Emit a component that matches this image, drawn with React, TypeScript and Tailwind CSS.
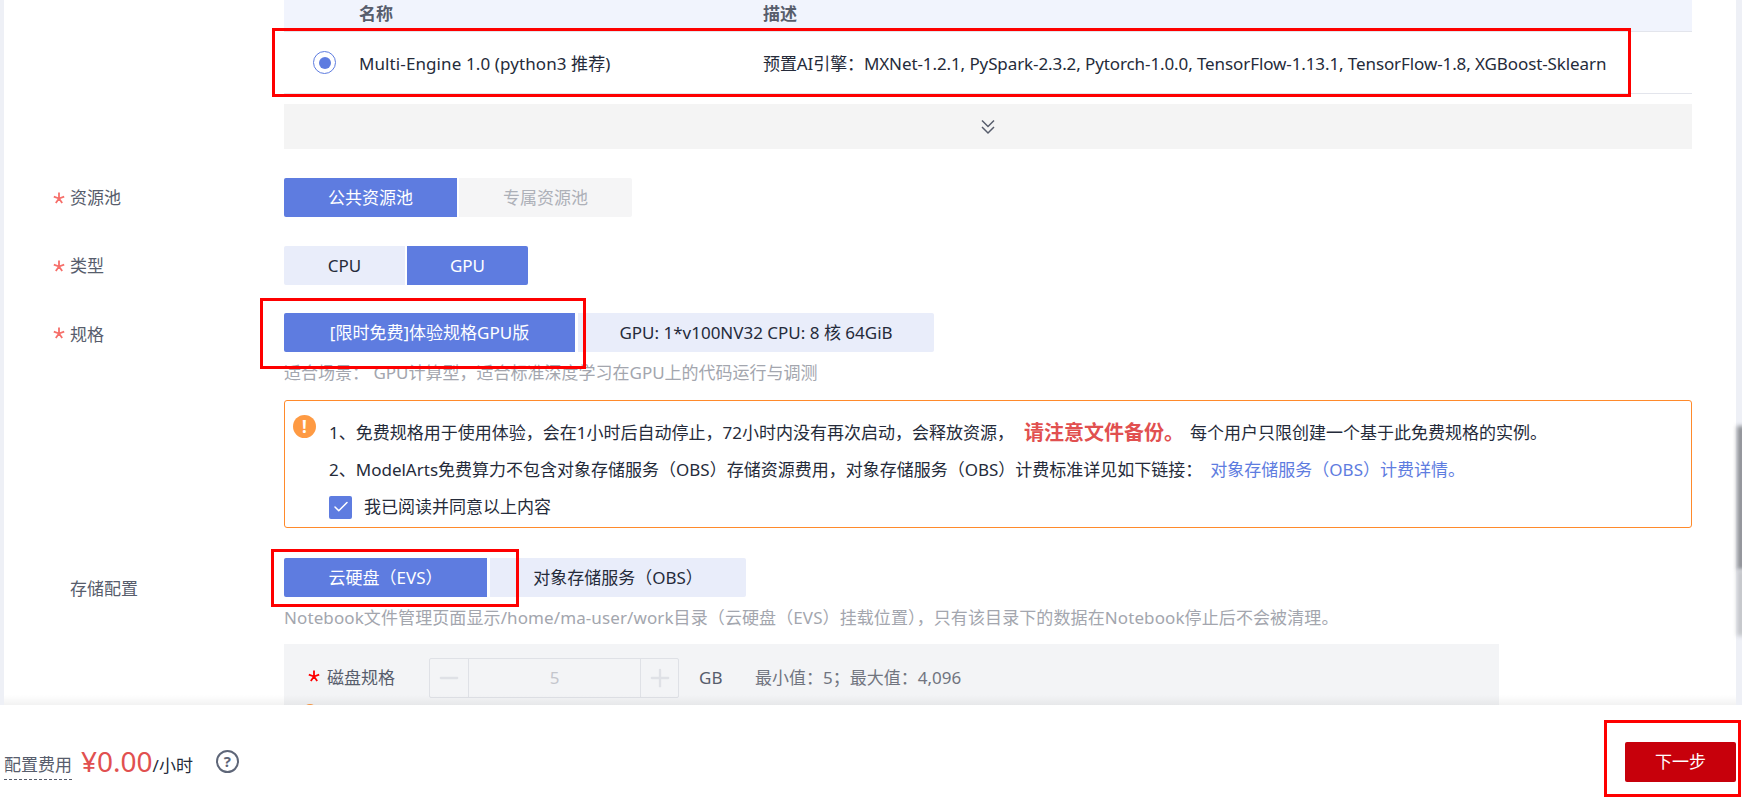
import { Check, Minus, Plus } from "lucide-react";

const font = { fontFamily: '"Noto Sans", "Noto Sans CJK SC", sans-serif' };

function FormRow({ label, required, children, className, labelClass }: { label: string; required?: boolean; children: React.ReactNode; className?: string; labelClass?: string }) {
  return (
    <div className={`flex ${className ?? ""}`}>
      <div className={`relative flex h-[39px] w-[280px] shrink-0 items-center pl-[66px] text-[#575d6c] ${labelClass ?? ""}`}>
        {required && <Star className="absolute left-[49px] top-[14px] text-[#f66f6a]" />}
        {label}
      </div>
      <div className="min-w-0 flex-1">{children}</div>
    </div>
  );
}

function Star({ className }: { className?: string }) {
  return (
    <svg viewBox="0 0 12 12" className={`h-3 w-3 ${className ?? ""}`} fill="none" stroke="currentColor" strokeWidth="1.8">
      <path d="M6 0.5V6.5M6 6.5L0.8 4.6M6 6.5L11.2 4.6M6 6.5L2.8 11M6 6.5L9.2 11" />
    </svg>
  );
}

function Seg({ active, disabled, width, children, className }: { active?: boolean; disabled?: boolean; width: string; children: React.ReactNode; className?: string }) {
  const tone = active
    ? "bg-[#5e7ce0] text-white"
    : disabled
      ? "bg-[#f5f5f6] text-[#adb0b8]"
      : "bg-[#e9edfa] text-[#252b3a]";
  return (
    <div className={`flex h-[39px] items-center justify-center pt-px ${width} ${tone} ${className ?? ""}`}>{children}</div>
  );
}

function RedBox({ className }: { className: string }) {
  return <div className={`pointer-events-none absolute z-30 border-[3px] border-[#fe0000] ${className}`} />;
}

export default function App() {
  return (
    <div style={font} className="relative flex h-[804px] w-[1742px] flex-col overflow-hidden bg-white text-[17px] leading-6 text-[#252b3a]">
      <main className="relative h-[705px] shrink-0 overflow-hidden border-r-[6px] border-l-4 border-r-[#eef0f6] border-l-[#eef0f6] pl-[280px] pr-[44px]">
        {/* table */}
        <div>
          <div className="flex h-[32px] items-center border-b border-[#e3e5ec] bg-[#f1f4fd] pb-[3px] font-semibold text-[#575d6c]">
            <div className="w-[465px] pl-[75px]">名称</div>
            <div className="pl-[14px]">描述</div>
          </div>
          <div className="flex h-[62px] items-center border-b border-[#e3e5ec]">
            <div className="flex w-[465px] items-center pl-[29px]">
              <span className="mr-[23px] flex h-[23px] w-[23px] items-center justify-center rounded-full border border-[#5e7ce0]">
                <span className="h-3 w-3 rounded-full bg-[#5e7ce0]" />
              </span>
              <span className="pt-[2px] tracking-[0.1px]">Multi-Engine 1.0 (python3 推荐)</span>
            </div>
            <div className="whitespace-nowrap pl-[14px] pt-[2px] tracking-[-0.1px]">预置AI引擎：MXNet-1.2.1, PySpark-2.3.2, Pytorch-1.0.0, TensorFlow-1.13.1, TensorFlow-1.8, XGBoost-Sklearn</div>
          </div>
          <div className="mt-[10px] flex h-[45px] items-center justify-center bg-[#f4f4f4] text-[#575d6c]">
            <svg width="16" height="16" viewBox="0 0 16 16" fill="none" stroke="currentColor" strokeWidth="1.5">
              <path d="M2 1.5l6 6 6-6M2 8l6 6 6-6" />
            </svg>
          </div>
        </div>

        <div className="-ml-[280px] mt-[29px] flex flex-col">
          <FormRow label="资源池" required>
            <div className="flex gap-[2px]">
              <Seg active width="w-[173px]" className="rounded-l-[2px]">公共资源池</Seg>
              <Seg disabled width="w-[173px]" className="rounded-r-[2px]">专属资源池</Seg>
            </div>
          </FormRow>
          <FormRow label="类型" required className="mt-[29px]">
            <div className="flex gap-[2px]">
              <Seg width="w-[121px]" className="rounded-l-[2px]">CPU</Seg>
              <Seg active width="w-[121px]" className="rounded-r-[2px]">GPU</Seg>
            </div>
          </FormRow>
          <FormRow label="规格" required labelClass="pt-[4px]" className="mt-[28px]">
            <div className="flex gap-[3px]">
              <Seg active width="w-[291px]" className="rounded-l-[2px] pt-[3px]">[限时免费]体验规格GPU版</Seg>
              <Seg width="w-[356px]" className="rounded-r-[2px] pt-[3px]">GPU: 1*v100NV32 CPU: 8 核 64GiB</Seg>
            </div>
            <div className="mt-[9px] text-[#a3a6ae]">适合场景： GPU计算型，适合标准深度学习在GPU上的代码运行与调测</div>
            <div className="relative mt-[15px] h-[128px] w-[1408px] rounded-[3px] border border-[#ff8a2b] pl-[44px] pt-[20px]">
              <span className="absolute left-[8px] top-[14px] flex h-[23px] w-[23px] items-center justify-center rounded-full bg-[#fe9a43] text-[17px] font-bold text-white">!</span>
              <div className="flex h-6 items-center whitespace-nowrap">
                1、免费规格用于使用体验，会在1小时后自动停止，72小时内没有再次启动，会释放资源，
                <b className="ml-[10px] mr-[6px] text-[20px] text-[#e15050]">请注意文件备份。</b>
                每个用户只限创建一个基于此免费规格的实例。
              </div>
              <div className="mt-[13px] flex h-6 items-center whitespace-nowrap">
                2、ModelArts免费算力不包含对象存储服务（OBS）存储资源费用，对象存储服务（OBS）计费标准详见如下链接：
                <span className="ml-[8px] text-[#5e7ce0]">对象存储服务（OBS）计费详情。</span>
              </div>
              <div className="mt-[13px] flex items-center">
                <span className="mr-[12px] flex h-[23px] w-[23px] items-center justify-center rounded-[2px] bg-[#5e7ce0] text-white">
                  <Check size={18} strokeWidth={2} />
                </span>
                我已阅读并同意以上内容
              </div>
            </div>
          </FormRow>
          <FormRow label="存储配置" labelClass="pt-[22px]" className="mt-[30px]">
            <div className="flex gap-[3px]">
              <Seg active width="w-[203px]" className="rounded-l-[2px]">云硬盘（EVS）</Seg>
              <Seg width="w-[256px]" className="rounded-r-[2px]">对象存储服务（OBS）</Seg>
            </div>
            <div className="mt-[9px] whitespace-nowrap text-[17px] tracking-[0.1px] text-[#a3a6ae]">Notebook文件管理页面显示/home/ma-user/work目录（云硬盘（EVS）挂载位置），只有该目录下的数据在Notebook停止后不会被清理。</div>
            <div className="relative mt-[14px] flex h-[70px] w-[1215px] items-start bg-[#f3f4f6] pt-[14px] text-[#575d6c]">
              <Star className="absolute left-[24px] top-[26px] text-[#fe0000]" />
              <div className="ml-[43px] flex h-[40px] w-[102px] items-center">磁盘规格</div>
              <div className="flex h-[40px] w-[250px] items-center rounded-[2px] border border-[#dfe1e6] text-[#c4c6cc]">
                <span className="flex h-full w-[39px] items-center justify-center border-r border-[#dfe1e6]"><Minus size={28} strokeWidth={2} className="text-[#dfe1e6]" /></span>
                <span className="flex-1 text-center">5</span>
                <span className="flex h-full w-[38px] items-center justify-center border-l border-[#dfe1e6]"><Plus size={28} strokeWidth={2} className="text-[#dfe1e6]" /></span>
              </div>
              <div className="ml-[20px] flex h-[40px] w-[56px] items-center">GB</div>
              <div className="flex h-[40px] items-center whitespace-nowrap text-[#71757f]">最小值：5；最大值：4,096</div>
              <span className="absolute left-[19px] top-[60px] h-[14px] w-[14px] rounded-full bg-[#fe9a43]" />
            </div>
          </FormRow>
        </div>

        <div className="absolute bottom-0 left-0 right-0 h-[10px] bg-gradient-to-b from-transparent to-[#000]/5" />
      </main>

      {/* scrollbar shadow */}
      <div className="absolute left-[1737px] top-[426px] h-[144px] w-[8px] bg-[#8f9196] blur-[2px]" />
      <div className="absolute left-[1737px] top-[570px] h-[66px] w-[8px] bg-[#c4c6ca] blur-[2px]" />

      <footer className="relative flex h-[99px] items-center justify-between bg-white pl-1 pr-[6px]">
        <div className="flex items-center">
          <span className="mt-[24px] border-b border-dashed border-[#575d6c] pb-[2px] text-[#575d6c]">配置费用</span>
          <span className="ml-[9px] mt-[12px] text-[28px] leading-9 text-[#e15050]">¥0.00</span>
          <span className="mt-[22px] text-[#252b3a]">/小时</span>
          <span className="ml-[23px] mt-[13px] flex h-[23px] w-[23px] items-center justify-center rounded-full border-2 border-[#5e6678] text-[15px] font-bold text-[#5e6678]">?</span>
        </div>
        <button type="button" className="mt-[15px] flex h-[40px] w-[111px] items-center justify-center rounded-[2px] bg-[#c7000b] text-white">下一步</button>
      </footer>

      {/* review annotations */}
      <RedBox className="left-[272px] top-[28px] h-[69px] w-[1359px]" />
      <RedBox className="left-[260px] top-[298px] h-[71px] w-[326px]" />
      <RedBox className="left-[271px] top-[549px] h-[58px] w-[248px]" />
      <RedBox className="left-[1604px] top-[720px] h-[77px] w-[137px]" />
    </div>
  );
}
